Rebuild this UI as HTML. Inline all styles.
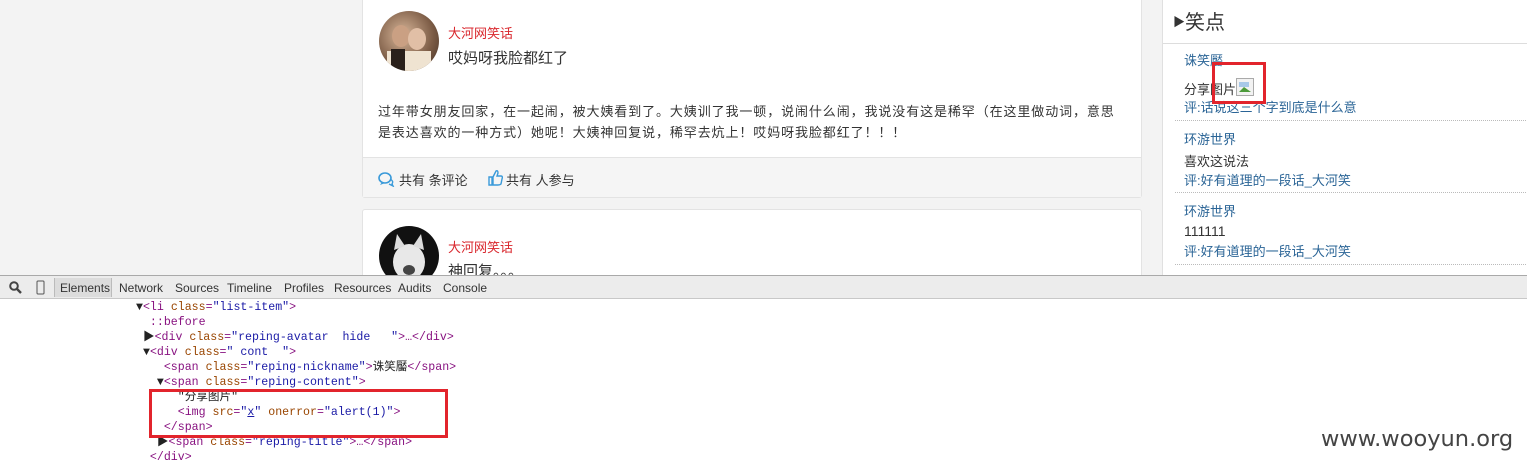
<!DOCTYPE html>
<html><head><meta charset="utf-8"><style>
*{margin:0;padding:0;box-sizing:border-box}
body{width:1527px;height:469px;overflow:hidden;background:#f3f3f3;font-family:"Liberation Sans","Microsoft YaHei","Noto Sans CJK SC",sans-serif;position:relative;font-size:13px;color:#333}
.card{position:absolute;left:362px;width:780px;background:#fff;border:1px solid #e3e3e3;border-radius:3px}
.av{position:absolute;left:16px;width:60px;height:60px;border-radius:50%;overflow:hidden}
.nick{position:absolute;left:85px;color:#d9262c;font-size:13px}
.title{position:absolute;left:85px;font-size:15px;color:#333}
.side{position:absolute;left:1162px;top:0;width:365px;height:275px;background:#fff;border-left:1px solid #e0e0e0}
.dt{position:absolute;left:0;top:275px;width:1527px;height:194px;background:#fff}
.tb{height:24px;background:#ececec;border-top:1px solid #a9a9a9;border-bottom:1px solid #c8c8c8;font-size:12px;color:#333;position:relative}
.tb span{position:absolute;top:5px}
.code{font-family:"Liberation Mono","Noto Sans CJK SC",monospace;font-size:11.6px;line-height:15px;position:absolute;white-space:pre}
.t{color:#881280}.a{color:#994500}.v{color:#1a1aa6}.g{color:#222}
</style></head><body>

<div class="card" style="top:-4px;height:202px">
  <div class="av" style="top:14px;background:radial-gradient(circle at 40% 40%,#d9b79a,#7a5a44 60%,#3c2b22)">
    <svg width="60" height="60"><ellipse cx="22" cy="25" rx="9" ry="11" fill="#caa083"/><ellipse cx="38" cy="28" rx="9" ry="11" fill="#e1bfa6"/><rect x="8" y="40" width="44" height="20" fill="#efe3d1"/><rect x="12" y="38" width="14" height="22" fill="#2a201b"/></svg>
  </div>
  <div class="nick" style="top:26px">大河网笑话</div>
  <div class="title" style="top:50px">哎妈呀我脸都红了</div>
  <div style="position:absolute;left:15px;top:104px;width:748px;font-size:13px;line-height:21px;letter-spacing:0.9px;color:#333">过年带女朋友回家，在一起闹，被大姨看到了。大姨训了我一顿，说闹什么闹，我说没有这是稀罕（在这里做动词，意思是表达喜欢的一种方式）她呢！大姨神回复说，稀罕去炕上！哎妈呀我脸都红了！！！</div>
  <div style="position:absolute;left:0;top:160px;width:778px;height:40px;background:#f5f5f5;border-top:1px solid #e3e3e3;font-size:13px;color:#333">
    <svg style="position:absolute;left:15px;top:14px" width="17" height="15" viewBox="0 0 17 15"><ellipse cx="7" cy="6" rx="6" ry="5" fill="none" stroke="#3a9ad9" stroke-width="1.6"/><path d="M4 10 L2 13 L7 11" fill="#3a9ad9"/><path d="M12 7 Q16 9 14 12 L15 14 L11 12" fill="none" stroke="#3a9ad9" stroke-width="1.4"/></svg>
    <span style="position:absolute;left:36px;top:12px">共有 条评论</span>
    <svg style="position:absolute;left:125px;top:11px" width="15" height="17" viewBox="0 0 15 17"><path d="M1 8 H4 V16 H1 Z M5 8 L8 2 Q10 1 10 4 L9 7 H13 Q15 7 14 10 L13 15 Q12 16 10 16 H5 Z" fill="none" stroke="#3a9ad9" stroke-width="1.4"/></svg>
    <span style="position:absolute;left:143px;top:12px">共有 人参与</span>
  </div>
</div>

<div class="card" style="top:209px;height:80px">
  <div class="av" style="top:16px;background:#111">
    <svg width="60" height="60"><ellipse cx="30" cy="36" rx="16" ry="18" fill="#e8e8e8"/><path d="M15 24 L18 8 L26 20 Z M45 24 L42 8 L34 20 Z" fill="#ddd"/><ellipse cx="30" cy="44" rx="6" ry="5" fill="#444"/></svg>
  </div>
  <div class="nick" style="top:27px">大河网笑话</div>
  <div class="title" style="top:50px">神回复。。。</div>
</div>

<div class="side">
  <div style="position:absolute;left:10px;top:6px;font-size:20px;color:#333"><span style="font-size:12px;vertical-align:3px">&#9654;</span>笑点</div>
  <div style="position:absolute;left:0;top:43px;width:365px;border-top:1px solid #ddd"></div>
  <div style="position:absolute;left:21px;top:50px;color:#2a6496">诛笑靨</div>
  <div style="position:absolute;left:21px;top:78px">分享图片<svg width="18" height="18" style="vertical-align:-2px"><rect x="0.5" y="0.5" width="17" height="17" fill="#f2f2f2" stroke="#aaa"/><path d="M3 14 L8 9 L15 14 Z" fill="#4c9a3a"/><rect x="3" y="4" width="10" height="5" fill="#a8c8e8"/></svg></div>
  <div style="position:absolute;left:21px;top:97px;color:#2a6496">评:话说这三个字到底是什么意</div>
  <div style="position:absolute;left:49px;top:62px;width:54px;height:42px;border:3px solid #e2242c"></div>
  <div style="position:absolute;left:12px;top:120px;width:353px;border-top:1px dotted #bbb"></div>
  <div style="position:absolute;left:21px;top:129px;color:#2a6496">环游世界</div>
  <div style="position:absolute;left:21px;top:151px">喜欢这说法</div>
  <div style="position:absolute;left:21px;top:170px;color:#2a6496">评:好有道理的一段话_大河笑</div>
  <div style="position:absolute;left:12px;top:192px;width:353px;border-top:1px dotted #bbb"></div>
  <div style="position:absolute;left:21px;top:201px;color:#2a6496">环游世界</div>
  <div style="position:absolute;left:21px;top:223px;font-size:14px">111111</div>
  <div style="position:absolute;left:21px;top:241px;color:#2a6496">评:好有道理的一段话_大河笑</div>
  <div style="position:absolute;left:12px;top:264px;width:353px;border-top:1px dotted #bbb"></div>
</div>

<div class="dt">
  <div class="tb">
    <svg style="position:absolute;left:9px;top:5px" width="13" height="13"><circle cx="5" cy="5" r="3.8" fill="none" stroke="#444" stroke-width="2"/><path d="M8 8 L12 12" stroke="#444" stroke-width="2.4"/></svg>
    <svg style="position:absolute;left:36px;top:4px" width="9" height="15"><rect x="1" y="1" width="7" height="13" rx="1" fill="none" stroke="#555"/></svg>
    <div style="position:absolute;left:54px;top:2px;width:58px;height:19px;background:#dcdcdc;border-left:1px solid #bbb;border-right:1px solid #bbb"></div>
    <span style="left:60px">Elements</span><span style="left:119px">Network</span><span style="left:175px">Sources</span><span style="left:227px">Timeline</span><span style="left:284px">Profiles</span><span style="left:334px">Resources</span><span style="left:398px">Audits</span><span style="left:443px">Console</span>
  </div>
  <div class="code" style="left:136px;top:25px"><span class="g">▼</span><span class="t">&lt;li </span><span class="a">class</span><span class="t">=</span><span class="v">"list-item"</span><span class="t">&gt;</span>
  <span class="t">::before</span>
 <span class="g">▶</span><span class="t">&lt;div </span><span class="a">class</span><span class="t">=</span><span class="v">"reping-avatar  hide   "</span><span class="t">&gt;…&lt;/div&gt;</span>
 <span class="g">▼</span><span class="t">&lt;div </span><span class="a">class</span><span class="t">=</span><span class="v">" cont  "</span><span class="t">&gt;</span>
    <span class="t">&lt;span </span><span class="a">class</span><span class="t">=</span><span class="v">"reping-nickname"</span><span class="t">&gt;</span><span class="g">诛笑靨</span><span class="t">&lt;/span&gt;</span>
   <span class="g">▼</span><span class="t">&lt;span </span><span class="a">class</span><span class="t">=</span><span class="v">"reping-content"</span><span class="t">&gt;</span>
      <span class="g">"分享图片"</span>
      <span class="t">&lt;img </span><span class="a">src</span><span class="t">=</span><span class="v">"<u>x</u>"</span> <span class="a">onerror</span><span class="t">=</span><span class="v">"alert(1)"</span><span class="t">&gt;</span>
    <span class="t">&lt;/span&gt;</span>
   <span class="g">▶</span><span class="t">&lt;span </span><span class="a">class</span><span class="t">=</span><span class="v">"reping-title"</span><span class="t">&gt;…&lt;/span&gt;</span>
  <span class="t">&lt;/div&gt;</span></div>
  <div style="position:absolute;left:149px;top:114px;width:299px;height:49px;border:3px solid #e2242c"></div>
  <div style="position:absolute;left:1321px;top:151px;font-size:22.5px;color:#444;font-family:'DejaVu Sans',sans-serif">www.wooyun.org</div>
</div>
</body></html>
